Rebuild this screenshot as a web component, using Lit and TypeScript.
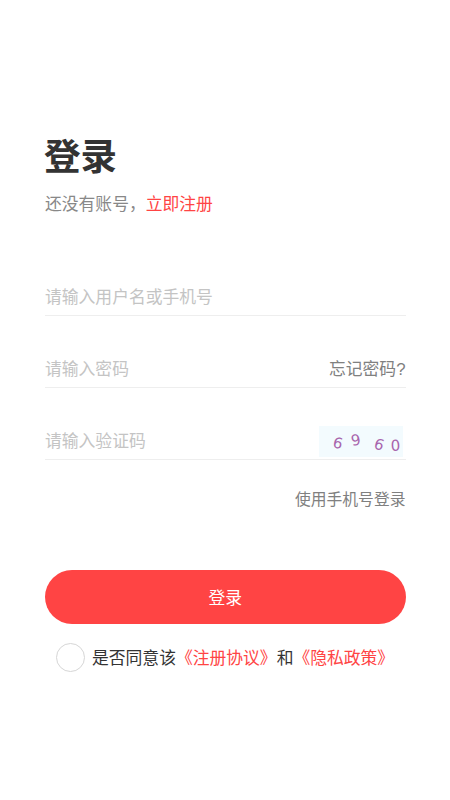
import { LitElement, html, css } from "lit";
import { customElement } from "lit/decorators.js";

@customElement("app-root")
export class AppRoot extends LitElement {
  static styles = css`
    :host {
      display: block;
      width: 450px;
      height: 800px;
      background: #fff;
      font-family: "Noto Sans CJK SC", "Liberation Sans", sans-serif;
      font-size: 16.8px;
      box-sizing: border-box;
      padding: 129px 44.5px 0 45px;
      overflow: hidden;
    }
    h1 {
      margin: 0 0 0 -1px;
      font-size: 36.5px;
      line-height: 52px;
      font-weight: 700;
      color: #333;
    }
    .sub {
      margin-top: 10px;
      line-height: 24px;
      color: #888;
    }
    .red { color: #ff4444; }
    .fields { margin-top: 29px; display: flex; flex-direction: column; }
    .row {
      height: 72px;
      box-sizing: border-box;
      border-bottom: 1px solid #eeeeee;
      display: flex;
      align-items: flex-end;
      justify-content: space-between;
      line-height: 24px;
      padding-bottom: 7px;
    }
    .ph { color: #c4c4c4; }
    .link { color: #808080; }
    .q { font-family: "Liberation Sans", sans-serif; line-height: 1; }
    .captcha {
      width: 84px;
      height: 31px;
      margin: 0 3px -5px 0;
      background: #f3fbfe;
      display: flex;
      align-items: center;
    }
    .captcha svg { display: block; }
    .captcha text {
      font-family: "DejaVu Sans", sans-serif;
      font-size: 15px;
      fill: #a865ad;
    }
    .alt { margin-top: 27px; text-align: right; line-height: 24px; font-size: 15.8px; }
    button {
      display: block;
      margin-top: 59px;
      width: 360.5px;
      height: 54px;
      border: 0;
      border-radius: 27px;
      background: #ff4444;
      color: #fff;
      font: inherit;
      padding: 0;
    }
    .agree {
      margin-top: 18px;
      padding-left: 11px;
      display: flex;
      align-items: center;
      gap: 7px;
      color: #333;
      line-height: 30px;
      white-space: nowrap;
    }
    .circle {
      width: 29px;
      height: 29px;
      box-sizing: border-box;
      border: 1.5px solid #d6d6d6;
      border-radius: 50%;
      flex: none;
    }
  `;

  render() {
    return html`
      <h1>登录</h1>
      <div class="sub">还没有账号，<span class="red">立即注册</span></div>
      <div class="fields">
        <div class="row"><span class="ph">请输入用户名或手机号</span></div>
        <div class="row"><span class="ph">请输入密码</span><span class="link">忘记密码<span class="q">?</span></span></div>
        <div class="row">
          <span class="ph">请输入验证码</span>
          <div class="captcha">
            <svg width="84" height="31" viewBox="0 0 84 31">
              <text transform="translate(13 21) rotate(14)">6</text>
              <text transform="translate(33 20) rotate(-10)">9</text>
              <text transform="translate(54 22) rotate(18)">6</text>
              <text transform="translate(72 25) rotate(-3)">0</text>
            </svg>
          </div>
        </div>
      </div>
      <div class="alt link">使用手机号登录</div>
      <button>登录</button>
      <div class="agree">
        <span class="circle"></span>
        <span>是否同意该<span class="red">《注册协议》</span>和<span class="red">《隐私政策》</span></span>
      </div>
    `;
  }
}
